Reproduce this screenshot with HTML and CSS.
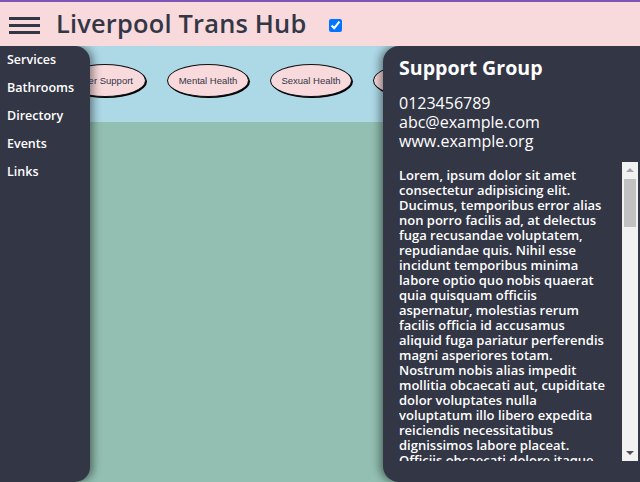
FILE: index.html
```html
<!DOCTYPE html>
<html lang="en">
<head>
<meta charset="utf-8">
<title>Liverpool Trans Hub</title>
<link rel="stylesheet" href="styles.css">
</head>
<body>
<header class="topbar">
  <button class="burger" aria-label="Menu">
    <span></span><span></span><span></span>
  </button>
  <h1 class="title">Liverpool Trans Hub</h1>
  <input class="toggle" type="checkbox" checked>
</header>
<main class="main">
  <section class="services">
    <div class="pill">Peer Support</div>
    <div class="pill">Mental Health</div>
    <div class="pill">Sexual Health</div>
    <div class="pill">Housing</div>
    <div class="pill">Legal</div>
  </section>
  <section class="map"></section>

  <nav class="sidebar">
    <a href="#">Services</a>
    <a href="#">Bathrooms</a>
    <a href="#">Directory</a>
    <a href="#">Events</a>
    <a href="#">Links</a>
  </nav>

  <aside class="panel">
    <h2 class="panel-title">Support Group</h2>
    <div class="contact">
      <div>0123456789</div>
      <div>abc@example.com</div>
      <div>www.example.org</div>
    </div>
    <div class="scrollbox">
      <div class="desc">
        <p>Lorem, ipsum dolor sit amet consectetur adipisicing elit. Ducimus, temporibus error alias non porro facilis ad, at delectus fuga recusandae voluptatem, repudiandae quis. Nihil esse incidunt temporibus minima labore optio quo nobis quaerat quia quisquam officiis aspernatur, molestias rerum facilis officia id accusamus aliquid fuga pariatur perferendis magni asperiores totam. Nostrum nobis alias impedit mollitia obcaecati aut, cupiditate dolor voluptates nulla voluptatum illo libero expedita reiciendis necessitatibus dignissimos labore placeat. Officiis obcaecati dolore itaque blanditiis, quos nesciunt sed saepe dolorum ipsam, laborum repellat vero tempora sint.</p>
      </div>
      <div class="scrollbar" aria-hidden="true">
        <div class="sb-btn sb-up"></div>
        <div class="sb-track"><div class="sb-thumb"></div></div>
        <div class="sb-btn sb-down"></div>
      </div>
    </div>
  </aside>
</main>
</body>
</html>
```

FILE: styles.css
```css
* { box-sizing: border-box; }
html, body { margin: 0; height: 100%; }
body {
  font-family: "Open Sans", "Lato", sans-serif;
  background: #92bfb1;
  display: flex;
  flex-direction: column;
  overflow: hidden;
}
.topbar {
  height: 46px;
  flex: 0 0 46px;
  background: #f8d9dc;
  border-top: 2px solid #7f55b5;
  display: flex;
  align-items: center;
  padding-left: 9px;
  position: relative;
  z-index: 1;
}
.burger {
  width: 31px;
  height: 17px;
  padding: 0;
  border: 0;
  background: transparent;
  display: flex;
  flex-direction: column;
  justify-content: space-between;
  margin-top: 2px;
}
.burger span {
  display: block;
  height: 3px;
  background: #333645;
}
.title {
  margin: -2px 0 0 16px;
  font-size: 25.4px;
  font-weight: 600;
  color: #333645;
  letter-spacing: 0.2px;
}
.toggle {
  margin: 2px 0 0 23px;
  width: 13px;
  height: 13px;
}
.main {
  flex: 1;
  position: relative;
  display: flex;
  flex-direction: column;
}
.services {
  height: 76px;
  background: #add8e6;
  display: flex;
  align-items: flex-start;
  gap: 21px;
  padding: 18px 0 0 64px;
  overflow: hidden;
}
.pill {
  flex: 0 0 82px;
  height: 33px;
  border-radius: 50%;
  background: #f8d9dc;
  border: 1.5px solid #111;
  box-shadow: 1px 1px 0 #000;
  font-family: "Liberation Sans", Arial, sans-serif;
  font-size: 9.5px;
  color: #333645;
  display: flex;
  align-items: center;
  justify-content: center;
}
.map { flex: 1; }
.sidebar {
  position: absolute;
  left: 0;
  top: 0;
  bottom: 0;
  width: 90px;
  background: #333645;
  border-radius: 0 15px 15px 0;
  box-shadow: 3px 0 8px rgba(0,0,0,0.45);
  display: flex;
  flex-direction: column;
}
.sidebar a {
  color: #fff;
  text-decoration: none;
  font-size: 12.5px;
  font-weight: 600;
  padding-left: 7px;
  line-height: 28px;
}
.panel {
  position: absolute;
  right: 0;
  top: 0;
  bottom: 0;
  width: 257px;
  background: #333645;
  border-radius: 16px 0 0 16px;
  box-shadow: -3px 0 8px rgba(0,0,0,0.45);
  padding: 8px 2px 21px 16px;
  color: #fff;
  display: flex;
  flex-direction: column;
}
.panel-title {
  margin: 0;
  font-size: 19.6px;
  font-weight: 700;
  line-height: 28px;
}
.contact {
  margin-top: 12px;
  font-size: 16px;
  line-height: 19px;
}
.scrollbox {
  margin-top: 11px;
  flex: 1;
  min-height: 0;
  display: flex;
}
.desc {
  flex: 1;
  overflow: hidden;
  font-size: 13px;
  font-weight: 600;
  line-height: 15px;
}
.desc p { margin: 0; padding: 6px 15px 0 0; }
.scrollbar {
  flex: 0 0 16px;
  background: #f1f1f1;
  display: flex;
  flex-direction: column;
}
.sb-btn {
  flex: 0 0 16px;
  display: flex;
  align-items: center;
  justify-content: center;
}
.sb-up::before {
  content: "";
  border-left: 4px solid transparent;
  border-right: 4px solid transparent;
  border-bottom: 4px solid #a3a3a3;
}
.sb-down::before {
  content: "";
  border-left: 4px solid transparent;
  border-right: 4px solid transparent;
  border-top: 4px solid #505050;
}
.sb-track { flex: 1; padding: 1px 2px; }
.sb-thumb {
  height: 48px;
  background: #c1c1c1;
}
```
